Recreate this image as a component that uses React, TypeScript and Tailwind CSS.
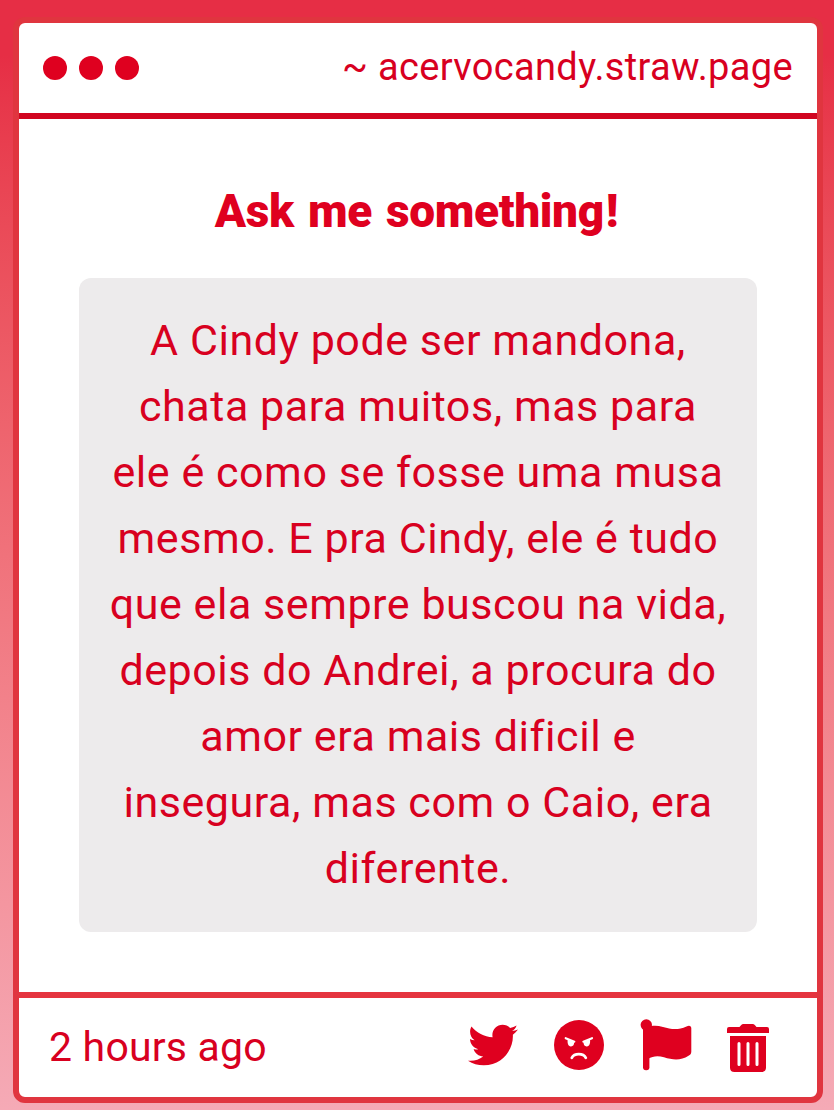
import React from "react";
import { FaTwitter } from "react-icons/fa";

const lines = [
  "A Cindy pode ser mandona,",
  "chata para muitos, mas para",
  "ele é como se fosse uma musa",
  "mesmo. E pra Cindy, ele é tudo",
  "que ela sempre buscou na vida,",
  "depois do Andrei, a procura do",
  "amor era mais dificil e",
  "insegura, mas com o Caio, era",
  "diferente.",
];

function AngryIcon() {
  return (
    <svg viewBox="0 0 50 50" className="mt-[-6px] size-[50px]" aria-hidden="true">
      <circle cx="25" cy="25" r="25" fill="currentColor" />
      <g fill="none" stroke="#fff" strokeLinecap="round" strokeLinejoin="round">
        <path d="M11.7 18.2 L20.3 21.7" strokeWidth="2.2" />
        <path d="M38 18.2 L29.4 21.7" strokeWidth="2.2" />
        <path d="M17.8 37.8 C20.3 33 29.3 33 31.8 37.8" strokeWidth="2.8" />
      </g>
      <path d="M13.7 19.5 L20 21.8 C20.6 24.8 18.8 26.6 16.8 26.4 C14.2 26.2 13.2 23.4 13.7 19.5Z" fill="#fff" />
      <path d="M36 19.5 L29.7 21.8 C29.1 24.8 30.9 26.6 32.9 26.4 C35.5 26.2 36.5 23.4 36 19.5Z" fill="#fff" />
    </svg>
  );
}

function FlagIcon() {
  return (
    <svg viewBox="0 0 52 52" className="mt-[-6px] h-[52px] w-[52px]" fill="currentColor" aria-hidden="true">
      <circle cx="6.3" cy="6" r="5.7" />
      <rect x="3" y="5" width="6.4" height="46.3" rx="3" />
      <path d="M8 8 C12 6.3 17 6.1 23 7.9 C31 10.3 38 11.4 46.5 7.4 C49.5 6 51.3 7 51.3 9.3 V32.5 C51.3 34.8 50.3 35.8 48.5 36.8 C41 41.8 33 41.2 24 38.3 C18 36.4 13 37 8 39.7Z" />
    </svg>
  );
}

function TrashIcon() {
  return (
    <svg viewBox="0 0 42 48" className="h-[48px] w-[42px]" fill="currentColor" aria-hidden="true">
      <path d="M2 3 H12.5 L14 1.2 Q15 0 16.5 0 H25.5 Q27 0 28 1.2 L29.5 3 H40 Q42 3 42 5 V9 H0 V5 Q0 3 2 3Z" />
      <path d="M3 12 H39 V43.5 Q39 48 34.5 48 H7.5 Q3 48 3 43.5Z" />
      <path d="M12 19.5 V40.5 M21 19.5 V40.5 M30 19.5 V40.5" stroke="#fff" strokeWidth="3" strokeLinecap="round" />
    </svg>
  );
}

export default function App() {
  return (
    <main className="h-[1110px] w-[834px] bg-linear-to-b from-[#e62e45] from-5% to-[#f5aab6] pt-[17px] pl-[13px] font-[Roboto,sans-serif] text-[#d8001f]">
      <article className="flex h-[1086px] w-[810px] flex-col overflow-hidden rounded-[12px] border-[6px] border-[#e0353f] bg-white">
        <header className="flex h-[96px] shrink-0 items-center justify-between border-b-[6px] border-[#d10520] px-6">
          <div className="flex gap-3">
            <span className="size-6 rounded-full bg-[#df001f]" />
            <span className="size-6 rounded-full bg-[#df001f]" />
            <span className="size-6 rounded-full bg-[#df001f]" />
          </div>
          <span className="mb-[2px] text-[38px] leading-[60px] tracking-[0.35px] whitespace-nowrap">~ acervocandy.straw.page</span>
        </header>
        <section className="flex flex-1 flex-col items-center pt-[58px]">
          <h1 className="pr-[3px] text-[46px] leading-[68px] font-black tracking-[-0.35px] whitespace-nowrap text-[#df001f] [word-spacing:3px]">
            Ask me something<span className="ml-[2px]">!</span>
          </h1>
          <p className="mt-[33px] h-[654px] w-[678px] rounded-[12px] bg-[#edebec] pt-[29px] text-center text-[43px] leading-[66px] tracking-[0.55px]">
            {lines.map((line) => (
              <span key={line} className="block whitespace-nowrap">{line}</span>
            ))}
          </p>
        </section>
        <footer className="flex h-[105px] shrink-0 items-center justify-between border-t-[6px] border-[#e5343f] pr-12 pl-[30px]">
          <time className="mb-[2px] text-[41px] leading-[60px] tracking-[0.2px]">2 hours ago</time>
          <div className="flex items-center text-[#df001f]">
            <FaTwitter size={50} className="mt-[-6px] mr-[36px]" />
            <AngryIcon />
            <span className="ml-[36px]"><FlagIcon /></span>
            <span className="ml-[35px]"><TrashIcon /></span>
          </div>
        </footer>
      </article>
    </main>
  );
}
